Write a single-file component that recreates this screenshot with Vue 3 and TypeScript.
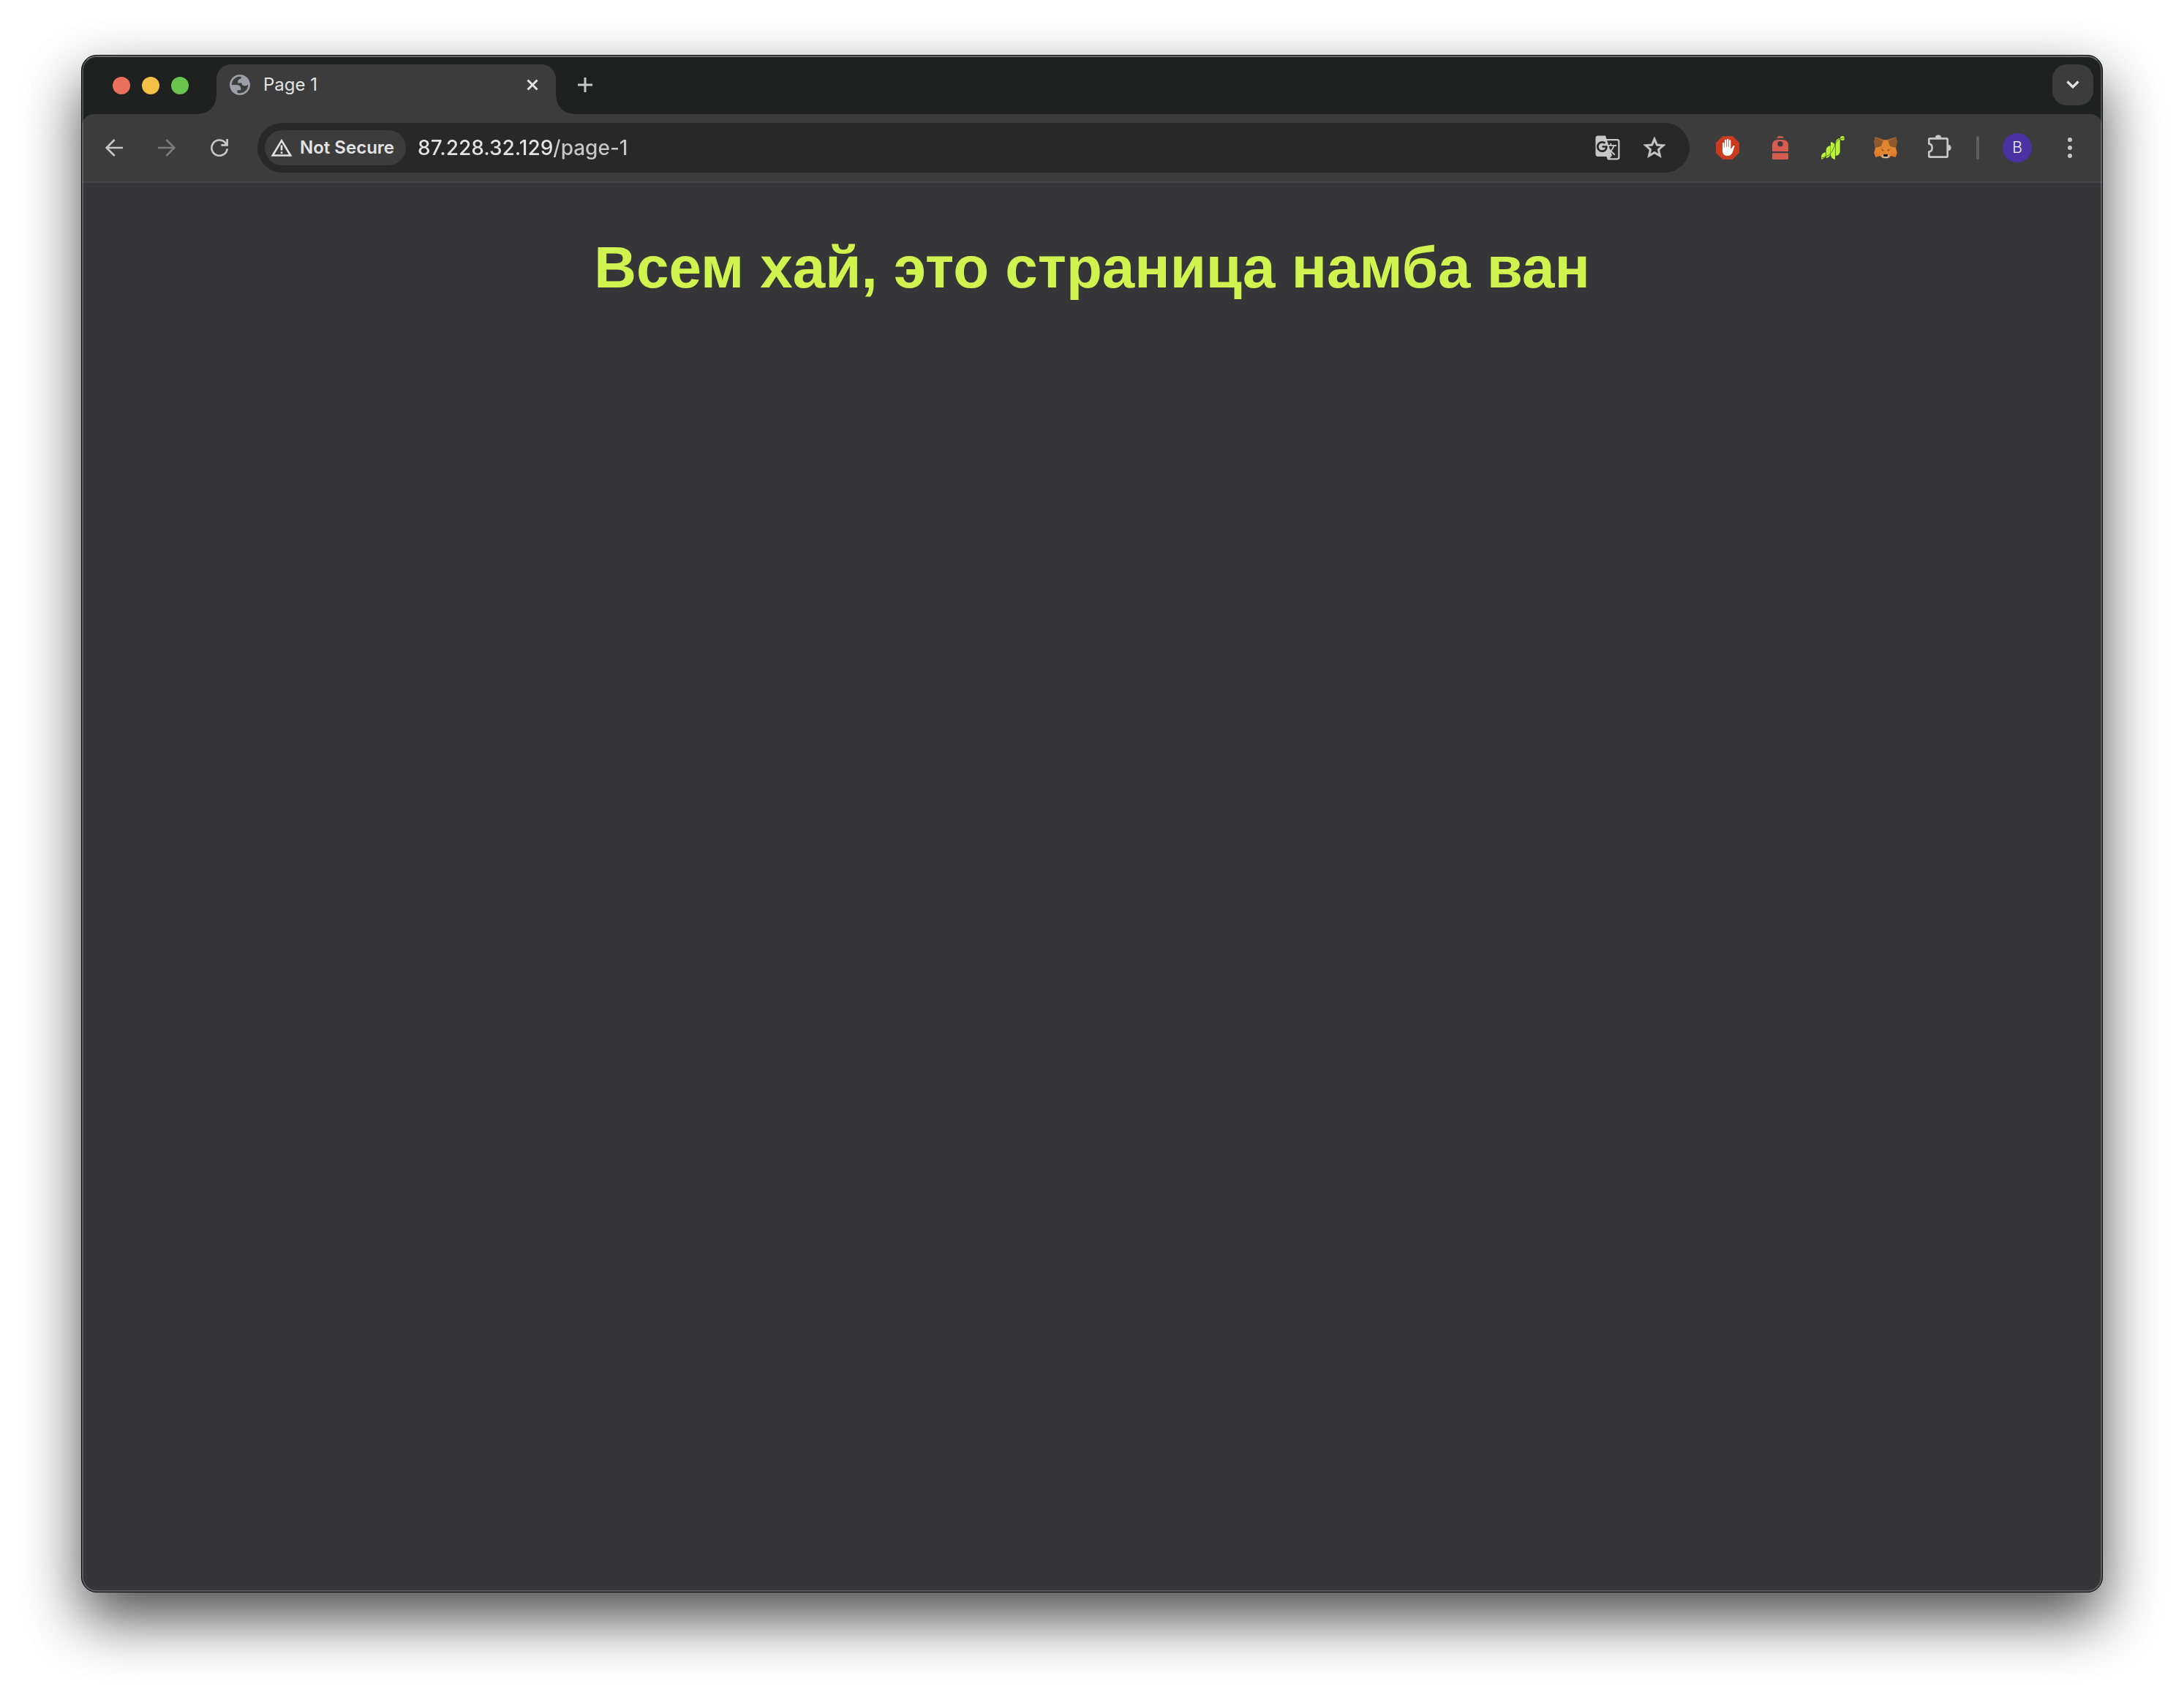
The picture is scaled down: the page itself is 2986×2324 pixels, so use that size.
<script setup lang="ts">
import { ref } from 'vue'

const address = ref('87.228.32.129/page-1')
const lights: string[] = ['close', 'minimize', 'zoom']
</script>

<template>
  <div class="desktop">
    <div class="window">
      <header class="strip">
        <div class="lights">
          <button v-for="name in lights" :key="name" type="button" class="light" :class="name" :aria-label="name"></button>
        </div>
        <div class="tab">
          <svg class="globe" viewBox="2 2 20 20" aria-hidden="true">
            <path d="M12 2C6.48 2 2 6.48 2 12s4.48 10 10 10 10-4.48 10-10S17.52 2 12 2zM4 12h4.4c3.407.022 4.922 1.73 4.543 5.127H9.488v2.47a8.004 8.004 0 0 0 10.498-8.08C19.327 12.507 18.332 13 17 13c-2.137 0-3.206-.916-3.206-2.75h-3.748c-.274-2.728.683-4.092 2.87-4.092 0-.975.327-1.597.811-1.97A8.004 8.004 0 0 0 4 12z" fill="#9c9fa8" fill-rule="evenodd" />
          </svg>
          <span class="tab-title">Page 1</span>
          <button type="button" class="tab-close" aria-label="Close tab">
            <svg width="16" height="16" viewBox="0 0 16 16"><path d="M1.5 1.5l13 13M14.500 1.500l-13 13" stroke="#e3e3e3" stroke-width="3" /></svg>
          </button>
        </div>
        <button type="button" class="new-tab" aria-label="New tab">
          <svg width="20" height="20" viewBox="0 0 20 20"><path d="M10 0v20M0 10h20" stroke="#c7c7c7" stroke-width="3" /></svg>
        </button>
        <button type="button" class="tab-search" aria-label="Search tabs">
          <svg width="18" height="12" viewBox="0 0 18 12"><path d="M1.500 1.500L9 9l7.500-7.500" fill="none" stroke="#e3e3e3" stroke-width="3.200" /></svg>
        </button>
      </header>

      <nav class="toolbar">
        <button type="button" class="tool" aria-label="Back">
          <svg width="24" height="24" viewBox="0 0 72 72"><path d="M72 36H6M38 3L5 36l33 33" fill="none" stroke="#c7c7c7" stroke-width="8" /></svg>
        </button>
        <button type="button" class="tool" aria-label="Forward">
          <svg width="24" height="24" viewBox="0 0 72 72"><path d="M0 36h66M34 3l33 33-33 33" fill="none" stroke="#7b7b7b" stroke-width="8" /></svg>
        </button>
        <button type="button" class="tool" aria-label="Reload">
          <svg width="24" height="24" viewBox="0 0 72 72">
            <path d="M68 40A32 32 0 1 1 59 14L66 23" fill="none" stroke="#c7c7c7" stroke-width="8" />
            <path d="M64 0h8v29H43v-8h13l8-7z" fill="#c7c7c7" />
          </svg>
        </button>

        <form class="omnibox" @submit.prevent>
          <button type="button" class="chip">
            <svg width="30" height="26" viewBox="0 0 30 26" aria-hidden="true">
              <path d="M15 3.200L27.200 23.500H2.800z" fill="none" stroke="#e3e3e3" stroke-width="2.600" />
              <path d="M15 9.500v7M15 18.500v2.500" stroke="#e3e3e3" stroke-width="2.600" />
            </svg>
            <span>Not Secure</span>
          </button>
          <input v-model="address" class="address" type="text" aria-label="Address" spellcheck="false" />
          <button type="button" class="inside" aria-label="Translate">
            <svg width="36" height="36" viewBox="0 0 24 24"><path fill="#c7c7c7" d="M21 4H11l-1-3H3c-1.100 0-2 .9-2 2v15c0 1.100.9 2 2 2h8l1 3h9c1.100 0 2-.9 2-2V6c0-1.100-.9-2-2-2zM7 16c-2.760 0-5-2.240-5-5s2.240-5 5-5c1.350 0 2.480.5 3.350 1.300L9.030 8.570c-.38-.36-1.040-.78-2.030-.78-1.740 0-3.150 1.440-3.150 3.210S5.260 14.210 7 14.210c2.010 0 2.840-1.440 2.920-2.410H7v-1.710h4.680c.07.31.12.61.12 1.020C11.800 13.970 9.890 16 7 16zm6.170-5.420h3.700c-.43 1.250-1.110 2.430-2.050 3.470-.31-.35-.6-.72-.86-1.100l-.79-2.370zm8.330 9.920c0 .55-.45 1-1 1H14l2-2.500-1.040-3.100 3.100 3.100.92-.92-3.300-3.250.02-.02c1.130-1.250 1.930-2.690 2.400-4.220H20v-1.300h-4.530V8h-1.290v1.290h-1.440L11.460 5.500h9.040c.55 0 1 .45 1 1v14z" /></svg>
          </button>
          <button type="button" class="inside" aria-label="Bookmark this page">
            <svg width="36" height="36" viewBox="0 0 24 24"><path fill="#c7c7c7" stroke="#c7c7c7" stroke-width=".4" d="M22 9.240l-7.190-.62L12 2 9.190 8.630 2 9.240l5.460 4.730L5.820 21 12 17.270 18.180 21l-1.630-7.030L22 9.240zM12 15.400l-3.760 2.270 1-4.280-3.320-2.880 4.380-.38L12 6.100l1.710 4.040 4.380.38-3.320 2.880 1 4.280L12 15.400z" /></svg>
          </button>
        </form>

        <button type="button" class="tool" aria-label="Ad blocker">
          <svg width="32" height="32" viewBox="0 0 96 96">
            <path d="M28 0h40l28 28v40L68 96H28L0 68V28z" fill="#cc3b1f" />
            <path d="M27 58V30q0-4 3.500-4t3.500 4v16h2V18q0-4 3.500-4t3.500 4v26h2V15q0-4 3.500-4t3.500 4v29h2V20q0-4 3.500-4t3.500 4v32l3-1 6-10q3-4 7-1-2 8-5 16-4 13-9 19-5 6-14 6-20 0-22-18z" fill="#fff" />
          </svg>
        </button>
        <button type="button" class="tool" aria-label="Backpack wallet">
          <svg width="32" height="32" viewBox="0 0 96 96" fill="#d75c50">
            <path d="M33 8Q36 0 44 0h8q8 0 11 8z" />
            <path fill-rule="evenodd" d="M15 63V39q0-24 24-24h18q24 0 24 24v24zM48 21a11 11 0 1 0 0 22 11 11 0 1 0 0-22z" />
            <path d="M15 70h66v21q0 5-5 5H20q-5 0-5-5z" />
          </svg>
        </button>
        <button type="button" class="tool" aria-label="Grass">
          <svg width="32" height="32" viewBox="0 0 96 96">
            <g fill="#b9f336">
              <path d="M0 96V84Q2 69 18 67V78Q17 90 0 96z" />
              <path d="M20 90V57Q22 42 38 39V73Q35 89 20 90z" />
              <path d="M39 79V24q17 3 18 18v54q-16-2-18-17z" />
              <path d="M59 81V27Q61 10 77 9V63Q76 80 59 81z" />
              <circle cx="87" cy="9" r="9" />
            </g>
            <path d="M0 90C34 86 46 64 56 38S74 12 96 8" fill="none" stroke="#5a7a22" stroke-width="3" />
          </svg>
        </button>
        <button type="button" class="tool" aria-label="Fox wallet">
          <svg width="32" height="32" viewBox="0 0 96 96">
            <path d="M5 4l35 12h16L91 4l4 20-5 24 5 20-6 18-18-5-9 9H34l-9-9-18 5L1 68l5-20L1 24z" fill="#e2872f" />
            <path d="M5 4l33 16-8 22-23 6-6-24zM91 4L58 20l8 22 23 6 6-24z" fill="#8e592c" />
            <path d="M5 4l35 12-3 5zM91 4L56 16l3 5z" fill="#b5672a" />
            <path d="M25 66L1 68l6 18 18-5zM71 66l24 2-6 18-18-5z" fill="#df7b2a" />
            <path d="M27 50l13 3 2 9-12-2zM69 50l-13 3-2 9 12-2z" fill="#cf7429" />
            <path d="M32 56l7 1v4zM64 56l-7 1v4z" fill="#2f343b" />
            <path d="M32 80l8-4h16l8 4-7 11H39z" fill="#c4b8a9" />
            <path d="M39 75h18l-1 9H40z" fill="#111" />
          </svg>
        </button>
        <button type="button" class="tool" aria-label="Extensions">
          <svg width="36" height="36" viewBox="0 0 108 108">
            <path d="M16 37V20q0-4 4-4h68q4 0 4 4v68q0 4-4 4H20q-4 0-4-4V71q13-3 13-17T16 37z" fill="none" stroke="#c7c7c7" stroke-width="8" />
            <path d="M42 14a12 12 0 0 1 24 0zM94 42a12 12 0 0 1 0 24z" fill="#c7c7c7" stroke="#c7c7c7" stroke-width="2" />
          </svg>
        </button>
        <span class="divider"></span>
        <button type="button" class="tool" aria-label="Profile">
          <span class="avatar">B</span>
        </button>
        <button type="button" class="tool" aria-label="Menu">
          <svg width="6" height="28" viewBox="0 0 6 28" fill="#c7c7c7"><circle cx="3" cy="3" r="3" /><circle cx="3" cy="14" r="3" /><circle cx="3" cy="25" r="3" /></svg>
        </button>
      </nav>

      <main class="page">
        <h1>Всем хай, это страница намба ван</h1>
      </main>
    </div>
  </div>
</template>

<style>
body {
  margin: 0;
  background: #fff;
}
</style>

<style scoped>
* {
  box-sizing: border-box;
}

button {
  display: flex;
  align-items: center;
  justify-content: center;
  flex: none;
  padding: 0;
  border: 0;
  background: none;
  font: inherit;
  color: inherit;
}

svg {
  display: block;
  flex: none;
}

.desktop {
  display: flex;
  min-height: 100vh;
  padding: 75px 111px 147px;
  background: #fff;
  font-family: Inter, "Liberation Sans", sans-serif;
  color: #e3e3e3;
}

.window {
  position: relative;
  display: flex;
  flex: 1;
  flex-direction: column;
  min-width: 0;
  overflow: hidden;
  border: 1px solid #000;
  border-radius: 21px;
  background: #1f2120;
  box-shadow: 0 36px 80px rgba(0, 0, 0, 0.7);
}

.window::after {
  content: "";
  position: absolute;
  inset: 0;
  border: 2px solid rgba(255, 255, 255, 0.2);
  border-top-color: rgba(255, 255, 255, 0.34);
  border-radius: 20px;
  pointer-events: none;
}

.strip {
  display: flex;
  align-items: flex-start;
  height: 80px;
  padding: 12px 12px 0 42px;
}

.lights {
  display: flex;
  align-items: center;
  gap: 16px;
  height: 58px;
  margin-right: 38px;
}

.light {
  width: 24px;
  height: 24px;
  border-radius: 50%;
}

.close {
  background: #e8705d;
}

.minimize {
  background: #f3bf46;
}

.zoom {
  background: #6ac44e;
}

.tab {
  position: relative;
  display: flex;
  align-items: center;
  width: 464px;
  height: 68px;
  padding: 0 12px 12px 18px;
  border-radius: 20px 20px 0 0;
  background: #3c3c3c;
}

.tab::before,
.tab::after {
  content: "";
  position: absolute;
  bottom: 0;
  width: 24px;
  height: 24px;
}

.tab::before {
  right: 100%;
  background: radial-gradient(circle at 0 0, transparent 23px, #3c3c3c 24px);
}

.tab::after {
  left: 100%;
  background: radial-gradient(circle at 100% 0, transparent 23px, #3c3c3c 24px);
}

.globe {
  width: 28px;
  height: 28px;
}

.tab-title {
  flex: 1;
  margin-left: 18px;
  font-size: 24px;
  line-height: 32px;
}

.tab-close {
  width: 40px;
  height: 40px;
}

.new-tab {
  width: 56px;
  height: 56px;
  margin-left: 12px;
}

.tab-search {
  width: 56px;
  height: 56px;
  margin-left: auto;
  border-radius: 20px;
  background: #3c3c3c;
}

.toolbar {
  display: flex;
  align-items: center;
  gap: 4px;
  height: 94px;
  padding: 0 10px;
  border-bottom: 2px solid #474747;
  border-radius: 16px 16px 0 0;
  background: #3c3c3c;
}

.tool {
  width: 68px;
  height: 68px;
}

.omnibox {
  display: flex;
  align-items: center;
  flex: 1;
  height: 68px;
  margin: 0 14px;
  padding: 0 16px 0 10px;
  border-radius: 34px;
  background: #282828;
}

.chip {
  gap: 10px;
  height: 48px;
  padding: 0 16px 0 8px;
  border-radius: 24px;
  background: #3c3c3c;
  font-size: 24px;
  font-weight: 600;
  line-height: 32px;
}

.address {
  flex: 1;
  min-width: 0;
  height: 48px;
  margin-left: 16px;
  padding: 0;
  border: 0;
  outline: 0;
  background: linear-gradient(90deg, #e3e3e3 188px, #c7c7c7 188px);
  background-clip: text;
  -webkit-background-clip: text;
  color: transparent;
  caret-color: #e3e3e3;
  font-family: inherit;
  font-size: 28px;
  font-weight: 500;
  line-height: 36px;
}

.inside {
  width: 64px;
  height: 64px;
}

.divider {
  width: 4px;
  height: 32px;
  margin: 0 14px;
  border-radius: 2px;
  background: #5e5e5e;
}

.avatar {
  width: 40px;
  height: 40px;
  border-radius: 50%;
  background: #4a32a3;
  color: #fff;
  font-family: Roboto, sans-serif;
  font-size: 22px;
  font-weight: 300;
  line-height: 40px;
  text-align: center;
}

.page {
  flex: 1;
  background: #363638;
}

.page h1 {
  margin: 70px 0 0;
  color: #d0f44f;
  font-family: "Liberation Sans", Arial, sans-serif;
  font-size: 80px;
  font-weight: 700;
  line-height: 92px;
  text-align: center;
}
</style>
